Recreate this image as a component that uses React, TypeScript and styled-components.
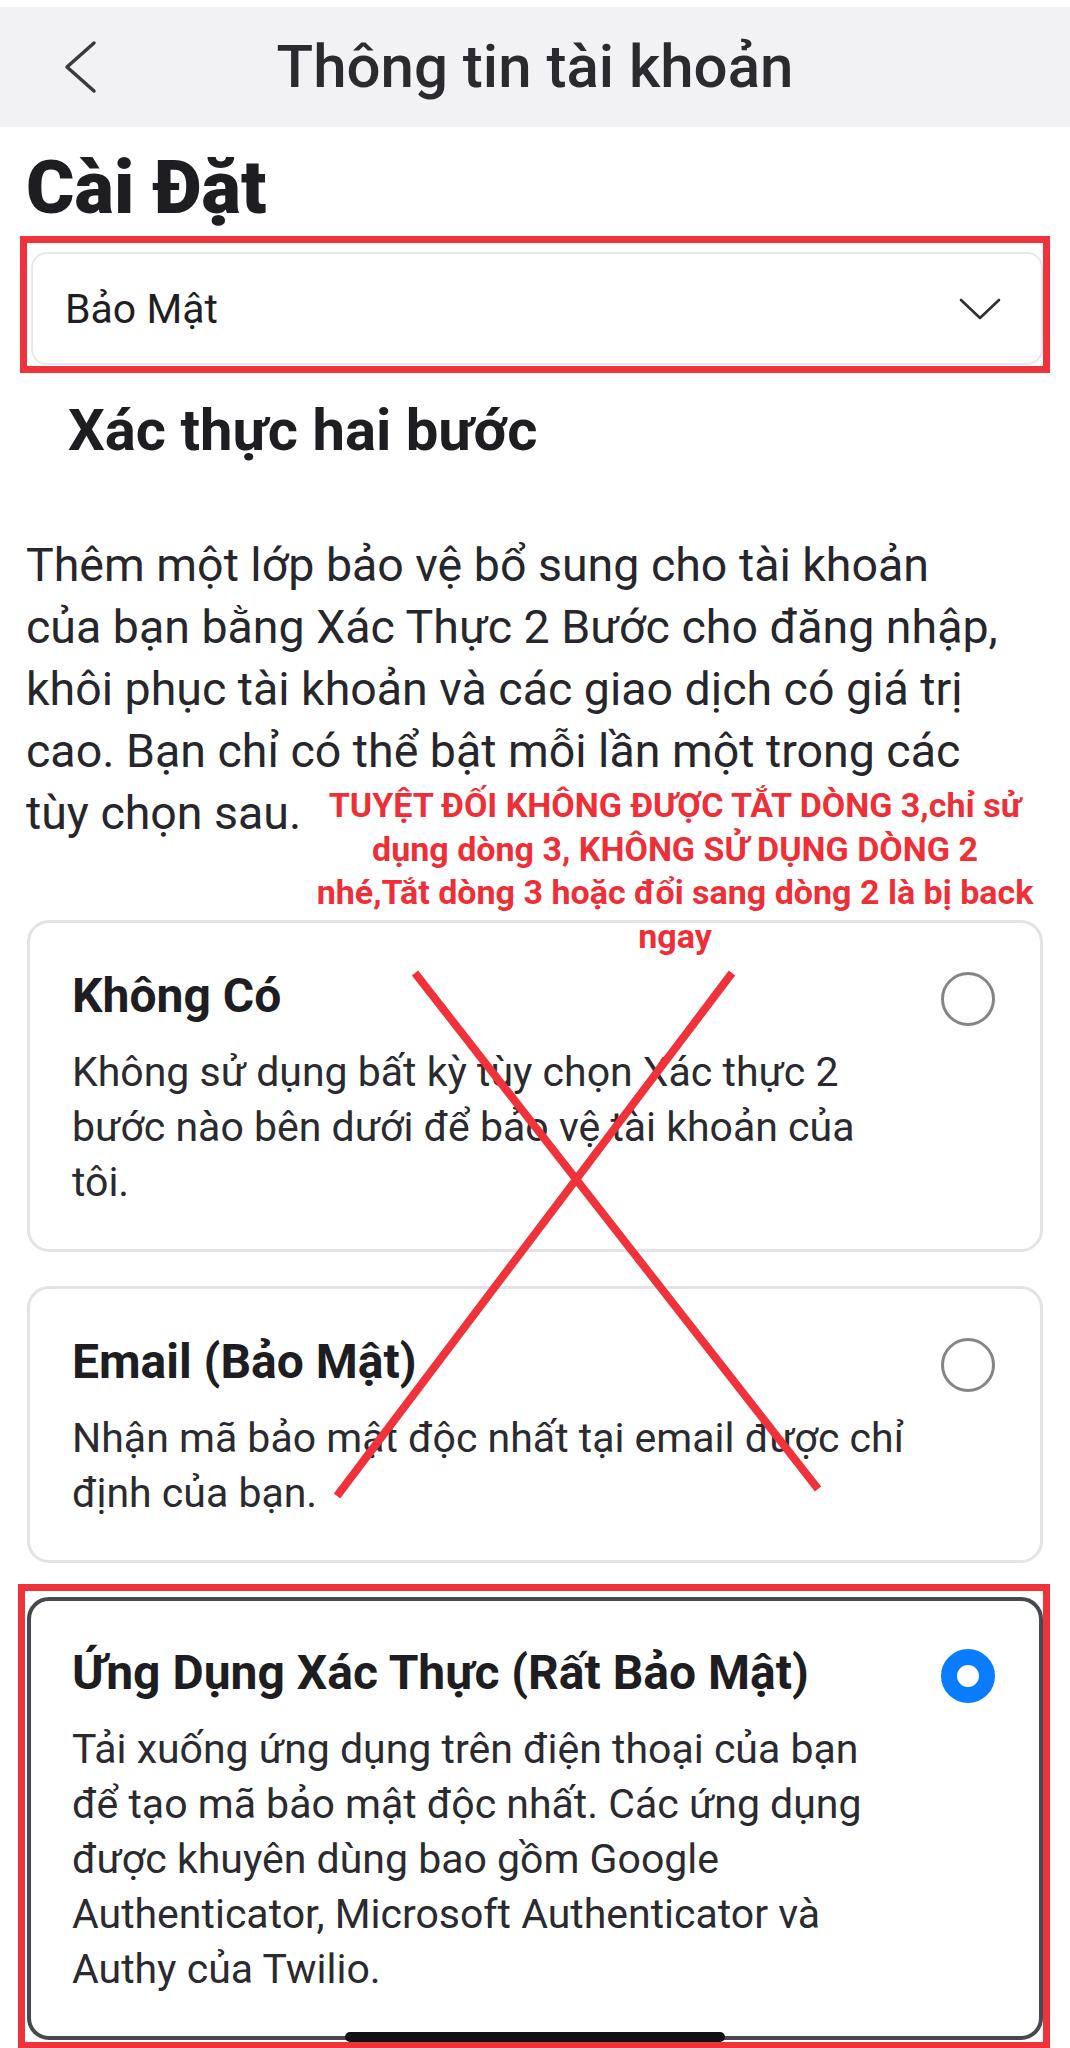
import styled, { createGlobalStyle } from 'styled-components';

const GlobalStyle = createGlobalStyle`
  html, body {
    margin: 0;
    padding: 0;
    background: #ffffff;
  }
  body {
    font-family: Roboto, "Noto Sans", sans-serif;
    color: #1d1d22;
  }
  * {
    box-sizing: border-box;
  }
`;

const Screen = styled.div`
  position: relative;
  width: 1070px;
  height: 2048px;
  overflow: hidden;
  background: #ffffff;
  padding-top: 7px;
`;

const NavBar = styled.header`
  height: 120px;
  background: #f2f2f4;
  display: grid;
  grid-template-columns: 1fr auto 1fr;
  align-items: center;
`;

const BackButton = styled.button`
  justify-self: start;
  margin-left: 60px;
  padding: 4px;
  border: 0;
  background: none;
  display: flex;
  cursor: pointer;
`;

const NavTitle = styled.h1`
  margin: 0;
  font-size: 60px;
  line-height: 72px;
  font-weight: 500;
  color: #2b2b2f;
`;

const Content = styled.main`
  padding: 0 26px;
`;

const PageTitle = styled.h2`
  margin: 24px 0 0;
  font-size: 74px;
  line-height: 74px;
  font-weight: 900;
  color: #1d1d22;
`;

const Highlight = styled.div<{ $pad: string; $margin: string }>`
  border: 7px solid #f0323a;
  padding: ${p => p.$pad};
  margin: ${p => p.$margin};
`;

const Select = styled.div`
  height: 113px;
  display: flex;
  align-items: center;
  justify-content: space-between;
  padding: 0 40px 0 32px;
  border: 2px solid #e6e8ef;
  border-radius: 16px;
  background: #ffffff;
`;

const SelectValue = styled.span`
  font-size: 41px;
  color: #1f1f23;
`;

const SectionTitle = styled.h3`
  margin: 27px 0 0 42px;
  font-size: 58px;
  line-height: 60px;
  font-weight: 700;
  color: #1d1d22;
`;

const Intro = styled.p`
  margin: 74px 0 0;
  max-width: 980px;
  font-size: 46.5px;
  line-height: 62px;
  color: #26262b;
`;

const CardList = styled.div`
  margin-top: 76px;
  padding: 0 1px;
  display: flex;
  flex-direction: column;
  gap: 34px;
`;

const OptionCard = styled.div<{ $selected?: boolean }>`
  display: grid;
  grid-template-columns: 1fr 54px;
  column-gap: 34px;
  row-gap: 19px;
  padding: ${p => (p.$selected ? '48px 44px 39px 41px' : '49px 45px 39px 42px')};
  border: ${p => (p.$selected ? '4px solid #46494f' : '3px solid #e3e3e7')};
  border-radius: 22px;
  background: #ffffff;
`;

const OptionTitle = styled.div`
  grid-column: 1;
  grid-row: 1;
  font-size: 48px;
  line-height: 48px;
  font-weight: 700;
  color: #1d1d22;
`;

const OptionDesc = styled.div`
  grid-column: 1;
  grid-row: 2;
  font-size: 41px;
  line-height: 55px;
  color: #2a2a2f;
`;

const Radio = styled.span<{ $checked?: boolean }>`
  grid-column: 2;
  grid-row: 1;
  align-self: center;
  width: 54px;
  height: 54px;
  border-radius: 50%;
  border: ${p => (p.$checked ? '16px solid #0a7cff' : '3.5px solid #858589')};
  background: #ffffff;
`;

const Note = styled.p`
  position: absolute;
  left: 300px;
  top: 784px;
  width: 750px;
  margin: 0;
  text-align: center;
  font-family: Roboto, "Liberation Sans", sans-serif;
  font-size: 34px;
  line-height: 43.5px;
  font-weight: 700;
  color: #ee2f37;
`;

const CrossMark = styled.svg`
  position: absolute;
  left: 330px;
  top: 965px;
  pointer-events: none;
`;

const HomeIndicator = styled.div`
  position: absolute;
  left: 345px;
  bottom: 6px;
  width: 380px;
  height: 10px;
  border-radius: 5px;
  background: #111114;
`;

interface Option {
  id: string;
  title: string;
  description: string;
}

const options: Option[] = [
  {
    id: 'none',
    title: 'Không Có',
    description: 'Không sử dụng bất kỳ tùy chọn Xác thực 2 bước nào bên dưới để bảo vệ tài khoản của tôi.',
  },
  {
    id: 'email',
    title: 'Email (Bảo Mật)',
    description: 'Nhận mã bảo mật độc nhất tại email được chỉ định của bạn.',
  },
  {
    id: 'app',
    title: 'Ứng Dụng Xác Thực (Rất Bảo Mật)',
    description:
      'Tải xuống ứng dụng trên điện thoại của bạn để tạo mã bảo mật độc nhất. Các ứng dụng được khuyên dùng bao gồm Google Authenticator, Microsoft Authenticator và Authy của Twilio.',
  },
];

const selectedId = 'app';

function OptionItem({ option }: { option: Option }) {
  const selected = option.id === selectedId;
  return (
    <OptionCard $selected={selected}>
      <OptionTitle>{option.title}</OptionTitle>
      <Radio $checked={selected} />
      <OptionDesc>{option.description}</OptionDesc>
    </OptionCard>
  );
}

export default function App() {
  return (
    <Screen>
      <GlobalStyle />
      <NavBar>
        <BackButton aria-label="Quay lại">
          <svg width="34" height="56" viewBox="0 0 34 56">
            <polyline points="30,4 3,28 30,52" fill="none" stroke="#3a3a3e" strokeWidth="3.5" strokeLinecap="round" strokeLinejoin="round" />
          </svg>
        </BackButton>
        <NavTitle>Thông tin tài khoản</NavTitle>
        <span />
      </NavBar>

      <Content>
        <PageTitle>Cài Đặt</PageTitle>

        <Highlight $pad="9px 0 1px 4px" $margin="11px -6px 0">
          <Select>
            <SelectValue>Bảo Mật</SelectValue>
            <svg width="42" height="24" viewBox="0 0 42 24">
              <polyline points="2,3 21,21 40,3" fill="none" stroke="#2e2e33" strokeWidth="2.6" strokeLinecap="round" strokeLinejoin="round" />
            </svg>
          </Select>
        </Highlight>

        <SectionTitle>Xác thực hai bước</SectionTitle>

        <Intro>
          Thêm một lớp bảo vệ bổ sung cho tài khoản của bạn bằng Xác Thực 2 Bước cho đăng nhập, khôi phục tài khoản và
          các giao dịch có giá trị cao. Bạn chỉ có thể bật mỗi lần một trong các tùy chọn sau.
        </Intro>

        <CardList>
          <OptionItem option={options[0]} />
          <OptionItem option={options[1]} />
          <Highlight $pad="6px 0 2px 2px" $margin="-13px -7px 0 -9px">
            <OptionItem option={options[2]} />
          </Highlight>
        </CardList>
      </Content>

      <Note>
        TUYỆT ĐỐI KHÔNG ĐƯỢC TẮT DÒNG 3,chỉ sử
        <br />
        dụng dòng 3, KHÔNG SỬ DỤNG DÒNG 2
        <br />
        nhé,Tắt dòng 3 hoặc đổi sang dòng 2 là bị back
        <br />
        ngay
      </Note>

      <CrossMark width="495" height="540" viewBox="0 0 495 540">
        <line x1="85" y1="8" x2="488" y2="524" stroke="#f0323a" strokeWidth="8" />
        <line x1="402" y1="8" x2="7" y2="531" stroke="#f0323a" strokeWidth="8" />
      </CrossMark>

      <HomeIndicator />
    </Screen>
  );
}
